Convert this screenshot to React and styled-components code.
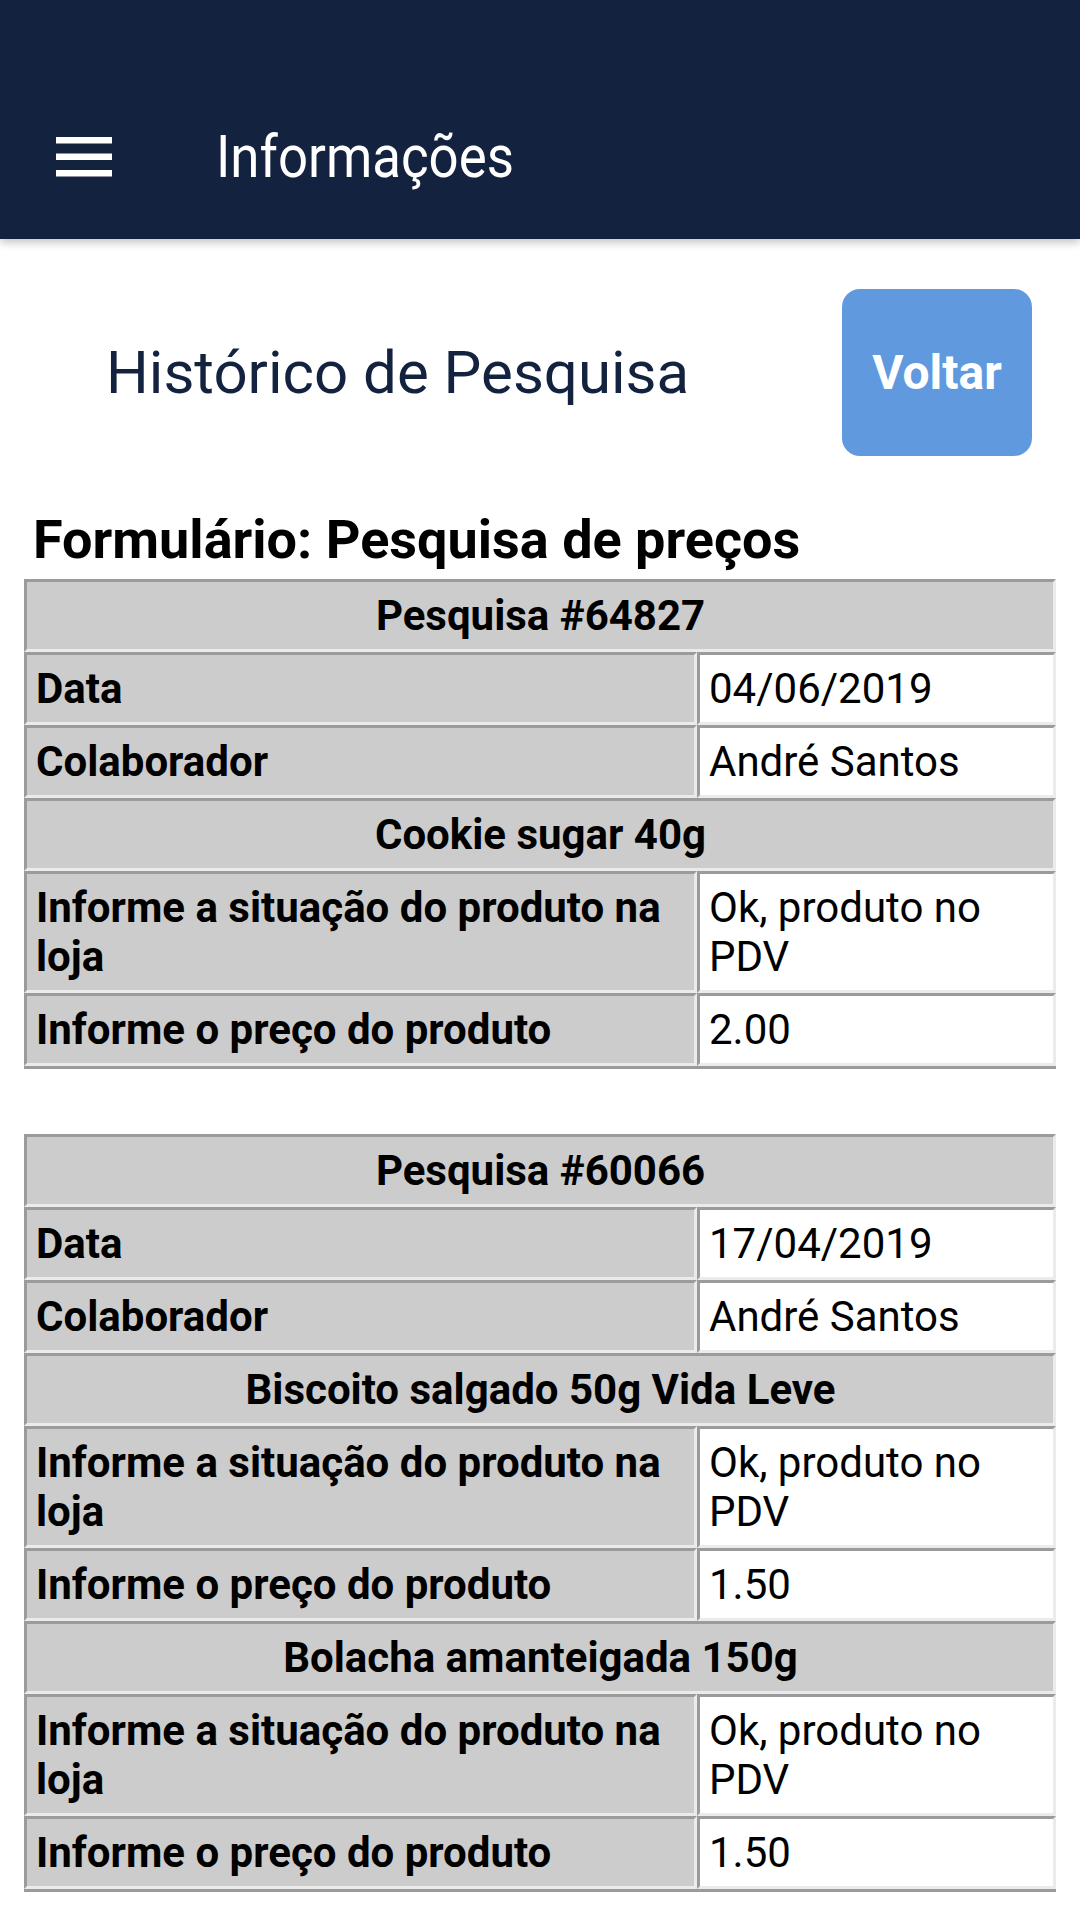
import React from "react";
import styled, { createGlobalStyle } from "styled-components";

const GlobalStyle = createGlobalStyle`
  html, body {
    margin: 0;
    padding: 0;
    background: #fff;
    font-family: Roboto, "Noto Sans", "Liberation Sans", sans-serif;
  }
  * { box-sizing: border-box; }
`;

const pesquisas = [
  {
    id: "64827",
    data: "04/06/2019",
    colaborador: "André Santos",
    produtos: [
      { nome: "Cookie sugar 40g", situacao: "Ok, produto no PDV", preco: "2.00" },
    ],
  },
  {
    id: "60066",
    data: "17/04/2019",
    colaborador: "André Santos",
    produtos: [
      { nome: "Biscoito salgado 50g Vida Leve", situacao: "Ok, produto no PDV", preco: "1.50" },
      { nome: "Bolacha amanteigada 150g", situacao: "Ok, produto no PDV", preco: "1.50" },
    ],
  },
];

const Toolbar = styled.header`
  height: 239px;
  padding: 74px 0 0 56px;
  background: #13223f;
  display: flex;
  align-items: center;
  box-shadow: 0 4px 8px rgba(0, 0, 0, 0.22);
  position: relative;
  z-index: 1;
`;

const MenuButton = styled.button`
  width: 56px;
  height: 40px;
  padding: 0;
  border: none;
  background: none;
  display: flex;
`;

const Title = styled.h1`
  margin: 0 0 0 104px;
  color: #fff;
  font-size: 60px;
  font-weight: 400;
  line-height: 1;
  transform: scaleX(0.88);
  transform-origin: left center;
`;

const TopRow = styled.div`
  display: flex;
  align-items: center;
  justify-content: space-between;
  padding: 50px 48px 0 106px;
`;

const PageTitle = styled.h2`
  margin: 0;
  font-size: 60px;
  font-weight: 400;
  color: #13223f;
`;

const BackButton = styled.button`
  width: 190px;
  height: 167px;
  border: none;
  border-radius: 18px;
  background: #6199df;
  color: #fff;
  font-family: inherit;
  font-size: 48px;
  font-weight: 700;
`;

const FormTitle = styled.h3`
  margin: 52px 0 7px 33px;
  font-size: 54px;
  font-weight: 700;
  line-height: 64px;
  color: #000;
`;

const Table = styled.table`
  width: 1032px;
  margin: 0 24px;
  border-collapse: separate;
  border-spacing: 0;
  table-layout: fixed;
  border-bottom: 3px solid #9b9b9b;
  & + & {
    margin-top: 65px;
  }
`;

const Cell = styled.td`
  padding: 9px 8px 9px 9px;
  border-top: 3px solid #9b9b9b;
  border-left: 3px solid #9b9b9b;
  border-bottom: 3px solid #ebebeb;
  border-right: 3px solid #ebebeb;
  background: ${(p) => (p.$value ? "#fff" : "#cccccc")};
  font-size: 42px;
  line-height: 49px;
  font-weight: ${(p) => (p.$value ? 400 : 700)};
  text-align: ${(p) => (p.$center ? "center" : "left")};
  color: #000;
  vertical-align: top;
`;

const MenuIcon = () => (
  <svg width="56" height="40" viewBox="0 0 56 40">
    <rect x="0" y="0" width="56" height="6.5" fill="#fff" />
    <rect x="0" y="16.5" width="56" height="6.5" fill="#fff" />
    <rect x="0" y="33" width="56" height="6.5" fill="#fff" />
  </svg>
);

const Linha = ({ label, value }) => (
  <tr>
    <Cell>{label}</Cell>
    <Cell $value>{value}</Cell>
  </tr>
);

const Pesquisa = ({ p }) => (
  <Table>
    <colgroup>
      <col style={{ width: 673 }} />
      <col />
    </colgroup>
    <tbody>
      <tr>
        <Cell colSpan={2} $center>Pesquisa #{p.id}</Cell>
      </tr>
      <Linha label="Data" value={p.data} />
      <Linha label="Colaborador" value={p.colaborador} />
      {p.produtos.map((prod) => (
        <React.Fragment key={prod.nome}>
          <tr>
            <Cell colSpan={2} $center>{prod.nome}</Cell>
          </tr>
          <Linha label="Informe a situação do produto na loja" value={prod.situacao} />
          <Linha label="Informe o preço do produto" value={prod.preco} />
        </React.Fragment>
      ))}
    </tbody>
  </Table>
);

export default function App() {
  return (
    <>
      <GlobalStyle />
      <Toolbar>
        <MenuButton aria-label="menu">
          <MenuIcon />
        </MenuButton>
        <Title>Informações</Title>
      </Toolbar>
      <TopRow>
        <PageTitle>Histórico de Pesquisa</PageTitle>
        <BackButton>Voltar</BackButton>
      </TopRow>
      <FormTitle>Formulário: Pesquisa de preços</FormTitle>
      {pesquisas.map((p) => (
        <Pesquisa key={p.id} p={p} />
      ))}
    </>
  );
}
